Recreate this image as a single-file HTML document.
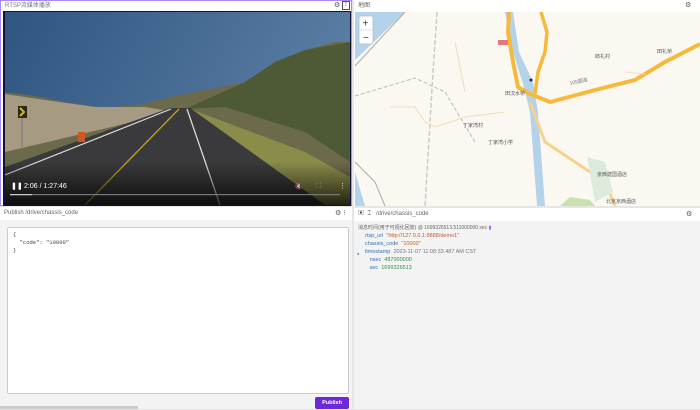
<!DOCTYPE html>
<html><head><meta charset="utf-8"><style>
*{margin:0;padding:0;box-sizing:border-box}
body{width:700px;height:409px;overflow:hidden;background:#e6e6e6;font-family:"Liberation Sans","Noto Sans CJK SC",sans-serif;position:relative}
.abs{position:absolute}
.hdr{position:absolute;background:#fff;font-size:6px;color:#666;line-height:11px;padding-left:4px}
.ic{position:absolute;font-size:7px;color:#555}
</style></head><body>
<!-- video panel -->
<div class="abs" style="left:0;top:0;width:352px;height:206px;background:#fff;border:1px solid #a78bfa"></div>
<div class="hdr" style="left:1px;top:1px;width:350px;height:10px;line-height:10px;color:#777">RTSP流媒体播放</div>
<div class="ic" style="left:334px;top:1px">⚙</div>
<div class="abs" style="left:342px;top:1px;width:8px;height:9px;border:1px solid #555;font-size:6px;text-align:center;line-height:7px">⁝</div>
<div class="abs" style="left:3px;top:11px;width:348px;height:195px;background:#12123a"></div>
<svg class="abs" style="left:5px;top:12px" width="345" height="193" viewBox="0 0 345 193">
<defs>
<linearGradient id="sky" x1="0" y1="0" x2="1" y2="0.3"><stop offset="0" stop-color="#2f5580"/><stop offset="1" stop-color="#5b7ea4"/></linearGradient>
<linearGradient id="bot" x1="0" y1="0" x2="0" y2="1"><stop offset="0" stop-color="#000" stop-opacity="0"/><stop offset="1" stop-color="#000" stop-opacity="0.75"/></linearGradient>
</defs>
<rect width="345" height="193" fill="url(#sky)"/>
<path d="M0 80 L30 84 L60 90 L100 96 L140 92 L165 85 L200 78 L240 70 L270 50 L300 38 L330 30 L345 30 L345 193 L0 193Z" fill="#6b6a4a"/>
<path d="M240 70 L270 50 L300 38 L345 30 L345 150 L300 120 L220 95 L180 97Z" fill="#4e5a36"/>
<path d="M0 82 L40 88 L90 95 L140 95 L170 100 L0 140Z" fill="#a69a83"/>
<path d="M185 97 L300 140 L345 165 L345 193 L280 193 L200 110Z" fill="#8a8c4a"/>
<path d="M165 96 L185 96 L320 193 L0 193 L0 155Z" fill="#3a3a3c"/>
<path d="M166 97 L0 163" stroke="#ddd" stroke-width="1.2"/>
<path d="M174 97 L80 193" stroke="#c8a020" stroke-width="1.3"/>
<path d="M182 97 L215 193" stroke="#ddd" stroke-width="1.3"/>
<rect x="13" y="94" width="9" height="12" fill="#2a2a10"/><path d="M15 96 L19 100 L15 104" stroke="#d8b030" stroke-width="2" fill="none"/>
<line x1="17" y1="106" x2="17" y2="135" stroke="#777"/>
<rect x="73" y="120" width="7" height="10" fill="#d0581f"/>
<rect y="150" width="345" height="43" fill="url(#bot)"/>
<rect x="5" y="182" width="330" height="1.2" fill="#777"/><rect x="5" y="182" width="22" height="1.2" fill="#ccc"/>
<text x="6" y="176" font-size="7" fill="#fff" font-family="Liberation Sans">❚❚</text>
<text x="19" y="176" font-size="7" fill="#fff" font-family="Liberation Sans">2:06 / 1:27:46</text>
<text x="290" y="176" font-size="6" fill="#ddd">🔇</text>
<text x="311" y="176" font-size="7" fill="#999">⛶</text>
<text x="334" y="176" font-size="7" fill="#eee">⋮</text>
</svg>

<!-- map panel -->
<div class="abs" style="left:354px;top:0;width:346px;height:206px;background:#fff"></div>
<div class="hdr" style="left:354px;top:1px;width:346px;height:10px;line-height:10px">地图</div>
<div class="ic" style="left:685px;top:1px">⚙</div>
<svg class="abs" style="left:355px;top:12px" width="345" height="194" viewBox="0 0 345 194" font-family="Noto Sans CJK SC" font-size="5" fill="#555">
<rect width="345" height="194" fill="#fbf8f1"/>
<path d="M0 0 L50 0 L0 48Z" fill="#b4d3ea"/>
<path d="M0 54 L50 0" stroke="#aaa" stroke-width="1"/>
<path d="M0 84 L60 66 L90 80 L120 130" stroke="#bbb" stroke-width="1" fill="none" stroke-dasharray="4 2"/>
<path d="M0 150 L20 170 L30 194" stroke="#aaa" fill="none"/>
<path d="M0 160 L10 194 L0 194Z" fill="#b4d3ea"/>
<path d="M82 0 L78 60 L70 194" stroke="#ccc" stroke-width="1.5" stroke-dasharray="5 2" fill="none"/>
<path d="M150 0 L158 40 L168 72 L175 100 L178 140 L182 194 L190 194 L186 140 L183 100 L178 70 L164 40 L158 0Z" fill="#b4d3ea"/>
<path d="M175 90 L190 130 L220 150 L250 170 L260 194" stroke="#f6d28f" stroke-width="3" fill="none"/>
<path d="M154 0 L153 20 L158 50 L163 75 L175 82 L195 90 L240 78 L280 68 L310 50 L345 32" stroke="#f6b93b" stroke-width="4" fill="none"/>
<path d="M186 0 L192 20 L190 40 L183 60 L180 82" stroke="#f6b93b" stroke-width="3.5" fill="none"/>
<path d="M100 30 L110 80 M35 95 L60 95 L70 110 L80 115 L110 105 L150 100 M270 60 L290 62" stroke="#f0dcc0" stroke-width="1" fill="none"/>
<path d="M232 145 L250 150 L258 180 L240 190Z" fill="#dcebdc"/>
<path d="M205 194 L215 185 L235 188 L240 194Z" fill="#c8e3b0"/>
<rect x="143" y="28" width="10" height="5" fill="#e27a7a"/>
<circle cx="176" cy="68" r="1.5" fill="#223"/>
<text x="150" y="83">田汉水桥</text>
<text x="240" y="46">郎礼村</text>
<text x="302" y="41">田礼桥</text>
<text x="108" y="115">丁家湾村</text>
<text x="133" y="132">丁家湾小学</text>
<text x="242" y="164">京西建国酒店</text>
<text x="251" y="191">北京京西酒店</text>
<text x="215" y="73" fill="#777" transform="rotate(-12 215 73)">109国道</text>
<rect x="4" y="4" width="14" height="28" rx="2" fill="#fff" stroke="#bbb" stroke-width="0.8"/>
<line x1="4" y1="18" x2="18" y2="18" stroke="#ccc" stroke-width="0.6"/>
<text x="7.5" y="14.5" font-size="10" fill="#333" font-family="Liberation Sans">+</text>
<text x="8" y="29" font-size="10" fill="#333" font-family="Liberation Sans">−</text>
</svg>

<!-- publish panel -->
<div class="abs" style="left:0;top:207px;width:352px;height:202px;background:#f3f3f3"></div>
<div class="hdr" style="left:0;top:207px;width:352px;height:13px;line-height:13px">Publish /drive/chassis_code</div>
<div class="ic" style="left:335px;top:209px">⚙ ⁝</div>
<div class="abs" style="left:7px;top:227px;width:342px;height:167px;background:#fff;border:1px solid #ccc;border-radius:2px;font-family:'Liberation Mono',monospace;font-size:5.5px;color:#444;padding:3px 5px;line-height:8px;white-space:pre">{
  "code": "10000"
}</div>
<div class="abs" style="left:315px;top:397px;width:34px;height:12px;background:#6d28d9;border-radius:2px;color:#fff;font-size:5.5px;font-weight:bold;text-align:center;line-height:13px">Publish</div>
<div class="abs" style="left:0;top:406px;width:138px;height:3px;background:#ccc"></div>

<!-- raw messages panel -->
<div class="abs" style="left:354px;top:208px;width:346px;height:201px;background:#f3f3f3"></div>
<div class="hdr" style="left:354px;top:208px;width:346px;height:13px;line-height:13px;padding-left:4px"><span style="color:#444">▣ &nbsp;⌶</span> &nbsp;&nbsp;/drive/chassis_code</div>
<div class="ic" style="left:686px;top:210px">⚙</div>
<div class="abs" style="left:358px;top:224px;font-size:5px;color:#666;line-height:8px;white-space:pre">消息时间(用于可视化回放) @ 1699326513.511000000 sec <span style="color:#a855f7">▮</span></div>
<div class="abs" style="left:365px;top:232px;font-size:5.5px;line-height:8px;white-space:pre"><span style="color:#3b6fb0">rtsp_url</span>  <span style="color:#b7613a">"http://127.0.0.1:8888/demo1"</span>
<span style="color:#3b6fb0">chassis_code</span>  <span style="color:#b7613a">"10000"</span>
<span style="color:#3b6fb0">timestamp</span>  <span style="color:#777">2023-11-07 11:08:33.487 AM CST</span>
   <span style="color:#3b6fb0">nsec</span>  <span style="color:#3a8a50">487000000</span>
   <span style="color:#3b6fb0">sec</span>  <span style="color:#3a8a50">1699326513</span></div>
<div class="abs" style="left:357px;top:251px;font-size:4px;color:#3b6fb0">●</div>
</body></html>
